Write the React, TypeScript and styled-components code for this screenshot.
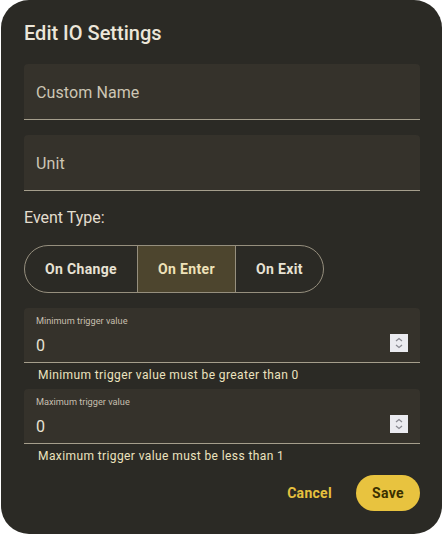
import styled, { createGlobalStyle } from "styled-components";

const GlobalStyle = createGlobalStyle`
  html, body {
    margin: 0;
    padding: 0;
    background: #ffffff;
  }
  body {
    font-family: Roboto, "Liberation Sans", sans-serif;
  }
`;

const EVENT_TYPES = ["On Change", "On Enter", "On Exit"];

const Spinner = () => (
  <SpinBox>
    <svg width="18" height="18" viewBox="0 0 18 18">
      <path d="M6 7 L9 4.5 L12 7" fill="none" stroke="#8a8a92" strokeWidth="1.3" />
      <path d="M6 11 L9 13.5 L12 11" fill="none" stroke="#8a8a92" strokeWidth="1.3" />
    </svg>
  </SpinBox>
);

export default function App() {
  return (
    <>
      <GlobalStyle />
      <Dialog>
        <Title>Edit IO Settings</Title>

        <TextField $top={17}>
          <Placeholder>Custom Name</Placeholder>
        </TextField>
        <TextField $top={15}>
          <Placeholder>Unit</Placeholder>
        </TextField>

        <SectionLabel>Event Type:</SectionLabel>
        <Segmented>
          {EVENT_TYPES.map((type) => (
            <Segment key={type} $selected={type === "On Enter"}>
              {type}
            </Segment>
          ))}
        </Segmented>

        <NumberField $top={15}>
          <FieldBody>
            <SmallLabel>Minimum trigger value</SmallLabel>
            <Value>0</Value>
          </FieldBody>
          <Spinner />
        </NumberField>
        <Helper>Minimum trigger value must be greater than 0</Helper>

        <NumberField $top={6}>
          <FieldBody>
            <SmallLabel>Maximum trigger value</SmallLabel>
            <Value>0</Value>
          </FieldBody>
          <Spinner />
        </NumberField>
        <Helper>Maximum trigger value must be less than 1</Helper>

        <Actions>
          <TextButton>Cancel</TextButton>
          <FilledButton>Save</FilledButton>
        </Actions>
      </Dialog>
    </>
  );
}

const Dialog = styled.div`
  box-sizing: border-box;
  margin-left: 1px;
  width: 441px;
  height: 534px;
  padding: 19px 22px 23px 23px;
  background: #2b2a25;
  border-radius: 28px;
  display: flex;
  flex-direction: column;
  color: #e8e2d4;
`;

const Title = styled.h2`
  margin: 0;
  font-size: 20px;
  line-height: 28px;
  font-weight: 500;
  color: #ece6d9;
`;

const TextField = styled.div<{ $top: number }>`
  box-sizing: border-box;
  margin-top: ${(p) => p.$top}px;
  height: 56px;
  padding: 2px 12px 0 12px;
  display: flex;
  align-items: center;
  background: #35322b;
  border-radius: 4px 4px 0 0;
  border-bottom: 1px solid #a59e8c;
`;

const Placeholder = styled.span`
  font-size: 16px;
  line-height: 24px;
  letter-spacing: 0.1px;
  color: #cdc6b4;
`;

const SectionLabel = styled.div`
  margin-top: 15px;
  font-size: 16px;
  line-height: 24px;
  color: #e3ddcf;
`;

const Segmented = styled.div`
  margin-top: 15px;
  align-self: flex-start;
  display: flex;
  height: 48px;
  box-sizing: border-box;
  border: 1px solid #968f7e;
  border-radius: 24px;
  overflow: hidden;
`;

const Segment = styled.div<{ $selected?: boolean }>`
  display: flex;
  align-items: center;
  padding: 0 20px;
  font-size: 14px;
  font-weight: 700;
  letter-spacing: 0.35px;
  background: ${(p) => (p.$selected ? "#4d452e" : "transparent")};
  color: ${(p) => (p.$selected ? "#efe2b9" : "#e8e2d4")};

  & + & {
    border-left: 1px solid #968f7e;
  }
`;

const NumberField = styled.div<{ $top: number }>`
  box-sizing: border-box;
  margin-top: ${(p) => p.$top}px;
  height: 55px;
  padding: 6px 12px 0 12px;
  display: flex;
  align-items: center;
  background: #35322b;
  border-radius: 4px 4px 0 0;
  border-bottom: 1px solid #a59e8c;
`;

const FieldBody = styled.div`
  flex: 1;
  display: flex;
  flex-direction: column;
  gap: 6px;
  align-self: flex-start;
`;

const SmallLabel = styled.span`
  font-size: 9.2px;
  line-height: 14px;
  color: #c6bfae;
`;

const Value = styled.span`
  font-size: 16px;
  line-height: 24px;
  color: #e8e2d4;
`;

const SpinBox = styled.span`
  display: flex;
  width: 18px;
  height: 18px;
  margin-top: 10px;
  background: #ebebf0;
`;

const Helper = styled.div`
  margin-top: 4px;
  padding-left: 14px;
  font-size: 12px;
  line-height: 16px;
  letter-spacing: 0.4px;
  color: #ece2bf;
`;

const Actions = styled.div`
  margin-top: 11px;
  display: flex;
  justify-content: flex-end;
  gap: 12px;
`;

const TextButton = styled.button`
  height: 36px;
  padding: 0 12px;
  border: none;
  background: transparent;
  font-family: Roboto, "Liberation Sans", sans-serif;
  font-size: 14px;
  font-weight: 700;
  letter-spacing: 0.3px;
  color: #e6c03e;
`;

const FilledButton = styled.button`
  height: 36px;
  width: 64px;
  border: none;
  border-radius: 18px;
  background: #e8c33f;
  font-family: Roboto, "Liberation Sans", sans-serif;
  font-size: 14px;
  font-weight: 700;
  letter-spacing: 0.3px;
  color: #3a3000;
`;
